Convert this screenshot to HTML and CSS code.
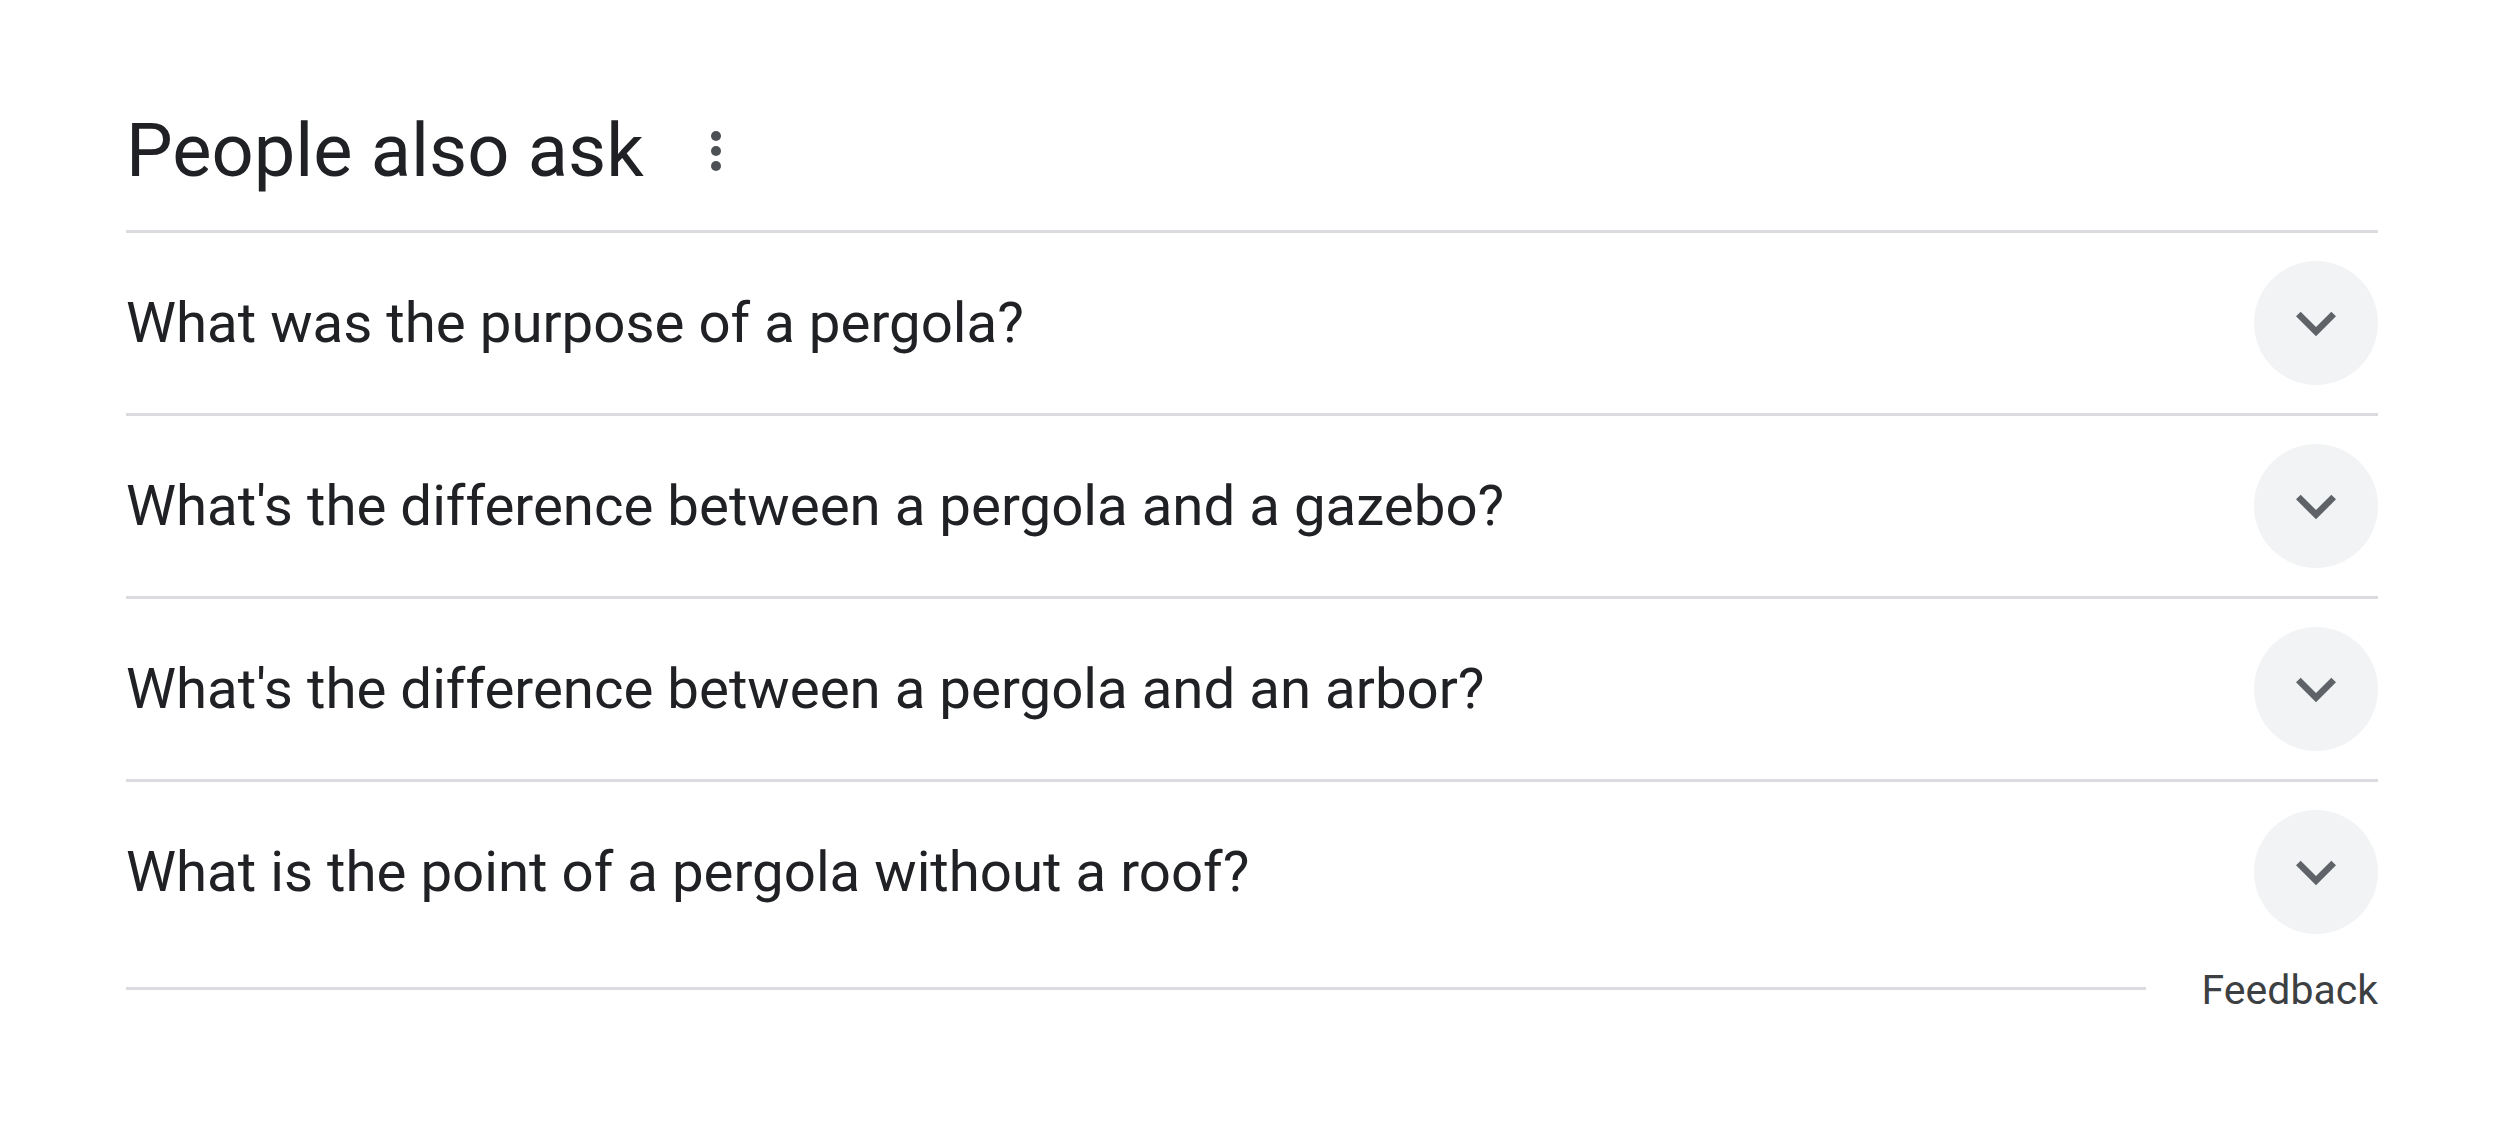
FILE: index.html
```html
<!DOCTYPE html>
<html lang="en">
<head>
<meta charset="utf-8">
<title>People also ask</title>
<link rel="stylesheet" href="styles.css">
</head>
<body>
<section class="paa">
  <header class="paa-head">
    <h2 class="paa-title">People also ask</h2>
    <button class="paa-more" aria-label="More options">
      <span class="dot"></span><span class="dot"></span><span class="dot"></span>
    </button>
  </header>
  <div class="paa-list">
    <div class="paa-row">
      <span class="paa-q">What was the purpose of a pergola?</span>
      <span class="paa-toggle"><svg viewBox="0 0 24 24" class="chev"><path d="M16.59 8.59L12 13.17 7.41 8.59 6 10l6 6 6-6z"/></svg></span>
    </div>
    <div class="paa-row">
      <span class="paa-q">What's the difference between a pergola and a gazebo?</span>
      <span class="paa-toggle"><svg viewBox="0 0 24 24" class="chev"><path d="M16.59 8.59L12 13.17 7.41 8.59 6 10l6 6 6-6z"/></svg></span>
    </div>
    <div class="paa-row">
      <span class="paa-q">What's the difference between a pergola and an arbor?</span>
      <span class="paa-toggle"><svg viewBox="0 0 24 24" class="chev"><path d="M16.59 8.59L12 13.17 7.41 8.59 6 10l6 6 6-6z"/></svg></span>
    </div>
    <div class="paa-row">
      <span class="paa-q">What is the point of a pergola without a roof?</span>
      <span class="paa-toggle"><svg viewBox="0 0 24 24" class="chev"><path d="M16.59 8.59L12 13.17 7.41 8.59 6 10l6 6 6-6z"/></svg></span>
    </div>
  </div>
  <footer class="paa-foot">
    <span class="paa-rule"></span>
    <span class="paa-feedback">Feedback</span>
  </footer>
</section>
</body>
</html>
```
FILE: styles.css
```css
html, body {
  margin: 0;
  padding: 0;
  background: #ffffff;
}
body {
  font-family: Roboto, "Liberation Sans", sans-serif;
  color: #202124;
}
.paa {
  width: 2252px;
  margin-left: 126px;
}
.paa-head {
  height: 230px;
  display: flex;
  align-items: center;
  gap: 67px;
  padding-top: 72px;
  box-sizing: border-box;
}
.paa-title {
  margin: 0;
  font-size: 74px;
  font-weight: 400;
  line-height: 90px;
  color: #202124;
}
.paa-more {
  border: 0;
  background: transparent;
  padding: 0;
  display: flex;
  flex-direction: column;
  gap: 5px;
  cursor: pointer;
}
.dot {
  width: 10px;
  height: 10px;
  border-radius: 50%;
  background: #4d5156;
}
.paa-row {
  height: 183px;
  box-sizing: border-box;
  border-top: 3px solid #dadce0;
  display: flex;
  align-items: center;
  justify-content: space-between;
}
.paa-q {
  font-size: 56.4px;
  line-height: 70px;
  color: #202124;
}
.paa-toggle {
  width: 124px;
  height: 124px;
  border-radius: 50%;
  background: #f1f3f4;
  display: flex;
  align-items: center;
  justify-content: center;
}
.chev {
  width: 80px;
  height: 80px;
  fill: #5f6368;
}
.paa-foot {
  height: 56px;
  display: flex;
  align-items: center;
  gap: 56px;
}
.paa-rule {
  flex: 1;
  height: 3px;
  margin-top: -4px;
  background: #dadce0;
}
.paa-feedback {
  font-size: 41px;
  line-height: 50px;
  color: #3c4043;
}
```
